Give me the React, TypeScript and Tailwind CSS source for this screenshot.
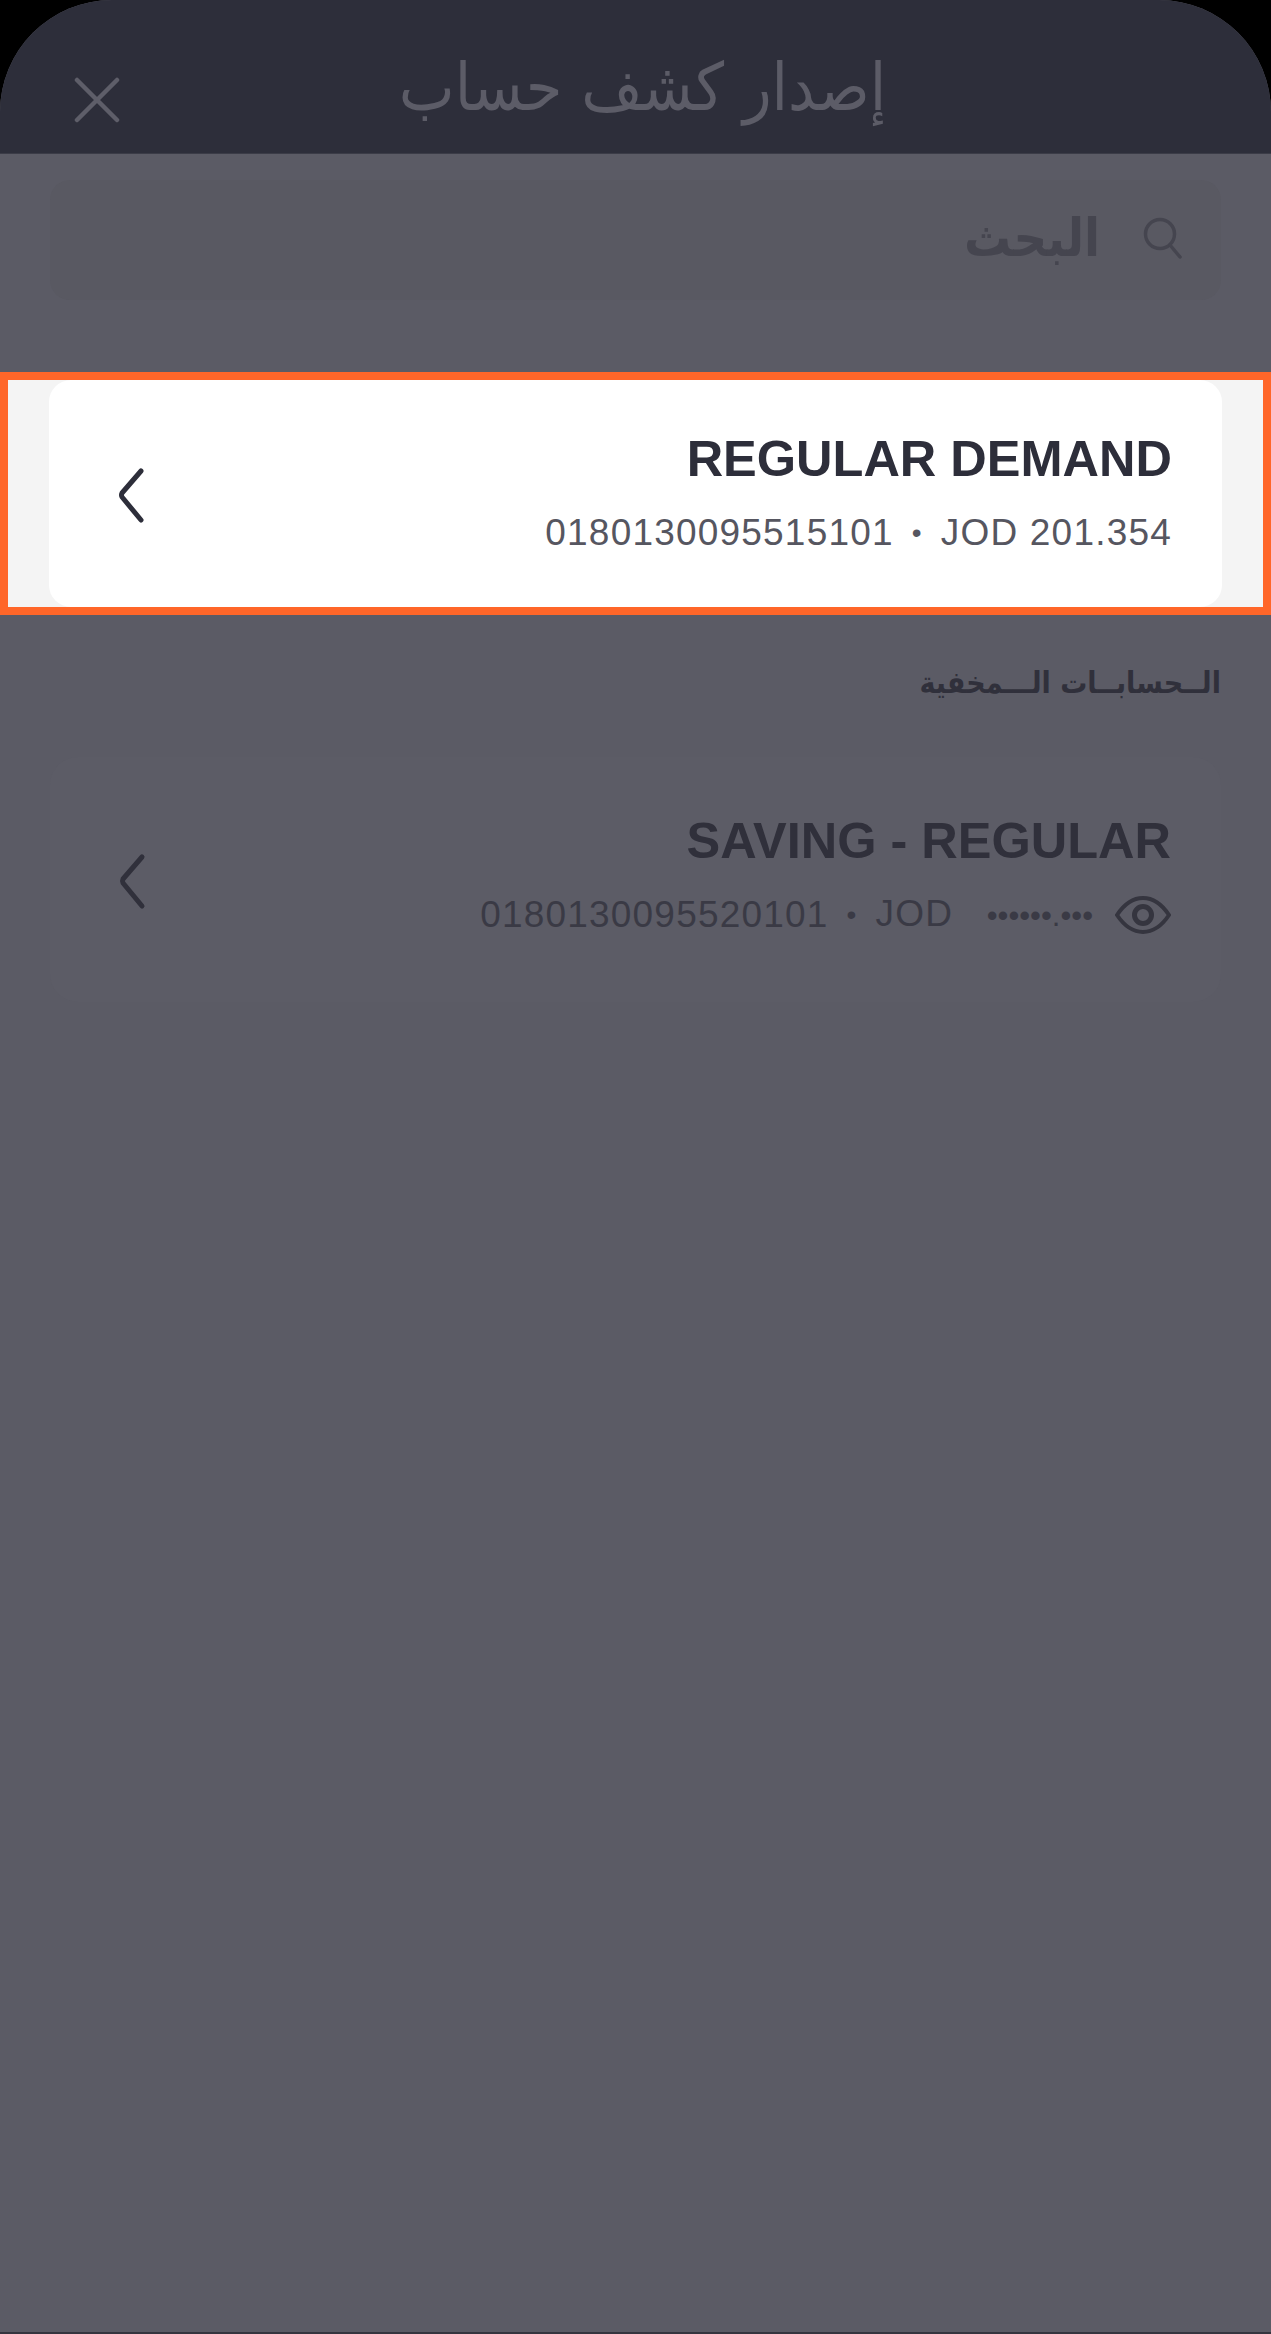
import React from "react";

const latin = "font-['Liberation_Sans','DejaVu_Sans',sans-serif]";

function Chevron({ color }: { color: string }) {
  return (
    <svg width="30" height="60" viewBox="0 0 30 60" className="shrink-0 mt-[2px]">
      <path d="M25 6 L6 28 Q5 30 6 32 L25 55" fill="none" stroke={color} strokeWidth="5" strokeLinecap="round" strokeLinejoin="round" />
    </svg>
  );
}

function Eye() {
  return (
    <svg width="56" height="38" viewBox="0 0 56 38" className="shrink-0">
      <path d="M2 19 C10 7 18 2 28 2 C38 2 46 7 54 19 C46 31 38 36 28 36 C18 36 10 31 2 19 Z" fill="none" stroke="#35353f" strokeWidth="4" />
      <circle cx="28" cy="19" r="8.5" fill="none" stroke="#35353f" strokeWidth="5" />
    </svg>
  );
}

function Sub({ num, children, color }: { num: string; children: React.ReactNode; color: string }) {
  return (
    <span className={`${latin} text-[37px] leading-[44px] tracking-[1.2px] whitespace-nowrap flex items-center gap-[18px] ${color}`}>
      <span>{num}</span>
      <span className="text-[28px]">•</span>
      <span>{children}</span>
    </span>
  );
}

export default function App() {
  return (
    <div className="w-[1271px] h-[2334px] bg-black overflow-hidden" dir="rtl">
      <div className="h-full flex flex-col rounded-t-[112px] overflow-hidden bg-[#5b5b65] border-b-2 border-[#35353f]">
        <header className="h-[154px] shrink-0 bg-[#2d2e3a] border-b border-[#3b3c47] relative flex items-center justify-center pl-[14px] pt-[22px]">
          <h1 className="text-[66px] leading-none font-normal text-[#5c5c67] font-['DejaVu_Sans_Condensed','DejaVu_Sans',sans-serif]">إصدار كشف حساب</h1>
          <svg width="46" height="46" viewBox="0 0 46 46" className="absolute left-[74px] top-[77px]">
            <path d="M3 3 L43 43 M43 3 L3 43" stroke="#5e5e69" strokeWidth="4.5" strokeLinecap="round" />
          </svg>
        </header>

        <div className="h-[170px] shrink-0 pt-[26px] px-[50px]">
          <div className="h-[120px] rounded-[20px] bg-[#595962] flex items-center gap-[43px] pr-[38px] pb-[4px]">
            <svg width="40" height="42" viewBox="0 0 40 42" className="shrink-0">
              <circle cx="17" cy="17" r="14.5" fill="none" stroke="#45454f" strokeWidth="3.5" />
              <path d="M27 28 L37 40" stroke="#45454f" strokeWidth="3.5" strokeLinecap="round" />
            </svg>
            <span className="text-[52px] leading-none font-bold text-[#45454f] font-['DejaVu_Sans_Condensed','DejaVu_Sans',sans-serif]">البحث</span>
          </div>
        </div>

        <div className="h-[48px] shrink-0" />

        <section className="h-[243px] shrink-0 border-[8px] border-[#ff6629] bg-[#f4f4f4] px-[41px]">
          <div className="h-full bg-white rounded-[22px] flex items-center justify-between pr-[50px] pl-[67px]">
            <div className="flex flex-col items-end" dir="ltr">
              <div className={`${latin} text-[50.5px] leading-[56px] font-bold text-[#2d2e3a] -mt-[2px]`}>REGULAR DEMAND</div>
              <div className="mt-[24px]">
                <Sub num="0180130095515101" color="text-[#565660]">JOD 201.354</Sub>
              </div>
            </div>
            <Chevron color="#2d2e3a" />
          </div>
        </section>

        <div className="px-[50px] pt-[44px] h-[142px] shrink-0">
          <div className="text-[30px] leading-[48px] font-bold text-[#30303b] font-['DejaVu_Sans_Condensed','DejaVu_Sans',sans-serif]">الــحسابــات الـــمخفية</div>
        </div>

        <div className="px-[50px]">
          <div className="h-[245px] bg-[#5c5c66] rounded-[28px] flex items-center justify-between pr-[50px] pl-[67px]">
            <div className="flex flex-col items-end" dir="ltr">
              <div className={`${latin} text-[50.5px] leading-[56px] font-bold text-[#30303b] -mt-[8px]`}>SAVING - REGULAR</div>
              <div className="flex items-center gap-[22px] mt-[23px]">
                <Sub num="0180130095520101" color="text-[#3a3a45]">
                  JOD <span className="text-[31px] tracking-[0px] ml-[22px]">••••••.•••</span>
                </Sub>
                <Eye />
              </div>
            </div>
            <Chevron color="#30303b" />
          </div>
        </div>
      </div>
    </div>
  );
}
